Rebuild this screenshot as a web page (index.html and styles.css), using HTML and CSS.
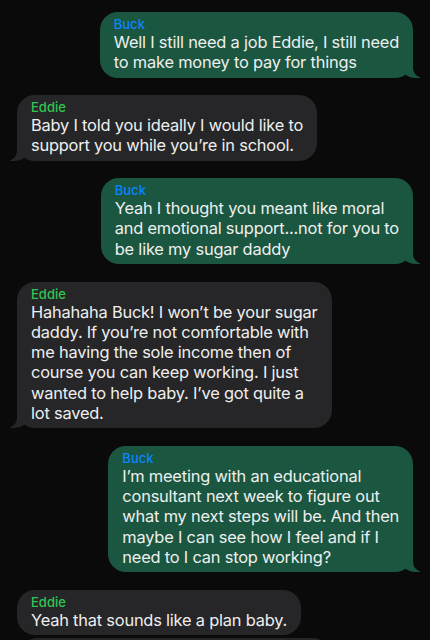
FILE: index.html
```html
<!DOCTYPE html>
<html>
<head>
<meta charset="utf-8">
<link rel="stylesheet" href="styles.css">
</head>
<body>
<div class="thread">
  <div class="msg sent tail">
    <div class="name buck">Buck</div>
    <div class="text">Well I still need a job Eddie, I still need<br>to make money to pay for things</div>
  </div>
  <div class="msg recv tail">
    <div class="name eddie">Eddie</div>
    <div class="text">Baby I told you ideally I would like to<br>support you while you’re in school.</div>
  </div>
  <div class="msg sent tail">
    <div class="name buck">Buck</div>
    <div class="text">Yeah I thought you meant like moral<br>and emotional support...not for you to<br>be like my sugar daddy</div>
  </div>
  <div class="msg recv tail">
    <div class="name eddie">Eddie</div>
    <div class="text">Hahahaha Buck! I won’t be your sugar<br>daddy. If you’re not comfortable with<br>me having the sole income then of<br>course you can keep working. I just<br>wanted to help baby. I’ve got quite a<br>lot saved.</div>
  </div>
  <div class="msg sent tail">
    <div class="name buck">Buck</div>
    <div class="text">I’m meeting with an educational<br>consultant next week to figure out<br>what my next steps will be. And then<br>maybe I can see how I feel and if I<br>need to I can stop working?</div>
  </div>
  <div class="msg recv">
    <div class="name eddie">Eddie</div>
    <div class="text">Yeah that sounds like a plan baby.</div>
  </div>
  <div class="msg recv next"></div>
</div>
</body>
</html>
```

FILE: styles.css
```css
html, body {
  margin: 0;
  padding: 0;
  background: #0a0a0a;
  height: 640px;
  overflow: hidden;
}

.thread {
  display: flex;
  flex-direction: column;
  gap: 17.5px;
  padding: 12px 17px 0 17px;
  font-family: Inter, "Noto Sans", sans-serif;
}

.msg {
  position: relative;
  border-radius: 18px;
  padding: 4px 14px 5px 14px;
  box-sizing: border-box;
  white-space: nowrap;
}

.sent {
  align-self: flex-end;
  background: #1b5740;
}

.recv {
  align-self: flex-start;
  background: #262628;
}

.msg.next {
  margin-top: -15px;
  width: 310px;
  height: 40px;
  margin-left: 3px;
}

.name {
  font-size: 13px;
  line-height: 16px;
  font-weight: 500;
}

.buck { color: #0a84ff; }
.eddie { color: #30c452; }

.text {
  font-size: 16.4px;
  line-height: 20.3px;
  color: #efefef;
  letter-spacing: -0.2px;
}

.tail.sent::before {
  content: "";
  position: absolute;
  bottom: 0;
  right: -7px;
  width: 20px;
  height: 20px;
  background: #1b5740;
  border-bottom-left-radius: 16px 14px;
}
.tail.sent::after {
  content: "";
  position: absolute;
  bottom: 0;
  right: -26px;
  width: 26px;
  height: 20px;
  background: #0a0a0a;
  border-bottom-left-radius: 10px;
}
.tail.recv::before {
  content: "";
  position: absolute;
  bottom: 0;
  left: -7px;
  width: 20px;
  height: 20px;
  background: #262628;
  border-bottom-right-radius: 16px 14px;
}
.tail.recv::after {
  content: "";
  position: absolute;
  bottom: 0;
  left: -26px;
  width: 26px;
  height: 20px;
  background: #0a0a0a;
  border-bottom-right-radius: 10px;
}
```
